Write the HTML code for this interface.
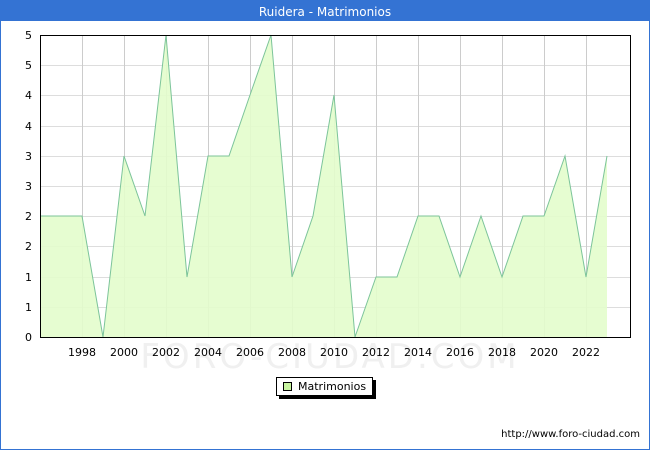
<!DOCTYPE html><html><head><style>body{margin:0;width:650px;height:450px;overflow:hidden;font-family:"DejaVu Sans","Liberation Sans",sans-serif}</style></head><body>
<svg width="650" height="450" xmlns="http://www.w3.org/2000/svg" font-family="DejaVu Sans, Liberation Sans, sans-serif">
<rect x="0" y="0" width="650" height="450" fill="#3473d3"/>
<rect x="1" y="21" width="648" height="428" fill="#fff"/>
<text x="325" y="16" fill="#fff" font-size="12" text-anchor="middle">Ruidera - Matrimonios</text>
<g stroke="#dddddd" stroke-width="1">
<line x1="40" y1="307.5" x2="630" y2="307.5"/><line x1="40" y1="277.5" x2="630" y2="277.5"/><line x1="40" y1="246.5" x2="630" y2="246.5"/><line x1="40" y1="216.5" x2="630" y2="216.5"/><line x1="40" y1="186.5" x2="630" y2="186.5"/><line x1="40" y1="156.5" x2="630" y2="156.5"/><line x1="40" y1="126.5" x2="630" y2="126.5"/><line x1="40" y1="95.5" x2="630" y2="95.5"/><line x1="40" y1="65.5" x2="630" y2="65.5"/>
</g>
<g stroke="#cccccc"><line x1="82.5" y1="35" x2="82.5" y2="337"/><line x1="124.5" y1="35" x2="124.5" y2="337"/><line x1="166.5" y1="35" x2="166.5" y2="337"/><line x1="208.5" y1="35" x2="208.5" y2="337"/><line x1="250.5" y1="35" x2="250.5" y2="337"/><line x1="292.5" y1="35" x2="292.5" y2="337"/><line x1="334.5" y1="35" x2="334.5" y2="337"/><line x1="376.5" y1="35" x2="376.5" y2="337"/><line x1="418.5" y1="35" x2="418.5" y2="337"/><line x1="460.5" y1="35" x2="460.5" y2="337"/><line x1="502.5" y1="35" x2="502.5" y2="337"/><line x1="544.5" y1="35" x2="544.5" y2="337"/><line x1="586.5" y1="35" x2="586.5" y2="337"/></g>
<text x="330" y="368" font-size="34" fill="#f0f0f0" text-anchor="middle" letter-spacing="3">FORO-CIUDAD.COM</text>
<polygon fill="#e3fdcc" fill-opacity="0.9" points="40,337 40,216 61,216 82,216 103,337 124,156 145,216 166,35 187,277 208,156 229,156 250,95 271,35 292,277 313,216 334,95 355,337 376,277 397,277 418,216 439,216 460,277 481,216 502,277 523,216 544,216 565,156 586,277 607,156 607,337"/>
<polyline fill="none" stroke="#7cc49a" stroke-width="1" points="40,216 61,216 82,216 103,337 124,156 145,216 166,35 187,277 208,156 229,156 250,95 271,35 292,277 313,216 334,95 355,337 376,277 397,277 418,216 439,216 460,277 481,216 502,277 523,216 544,216 565,156 586,277 607,156"/>
<rect x="40.5" y="35.5" width="590" height="302" fill="none" stroke="#000"/>
<g font-size="11" fill="#000" text-anchor="end">
<text x="32" y="341">0</text><text x="32" y="311">1</text><text x="32" y="281">1</text><text x="32" y="250">2</text><text x="32" y="220">2</text><text x="32" y="190">3</text><text x="32" y="160">3</text><text x="32" y="130">4</text><text x="32" y="99">4</text><text x="32" y="69">5</text><text x="32" y="39">5</text></g>
<g font-size="11" fill="#000" text-anchor="middle">
<text x="82" y="356">1998</text><text x="124" y="356">2000</text><text x="166" y="356">2002</text><text x="208" y="356">2004</text><text x="250" y="356">2006</text><text x="292" y="356">2008</text><text x="334" y="356">2010</text><text x="376" y="356">2012</text><text x="418" y="356">2014</text><text x="460" y="356">2016</text><text x="502" y="356">2018</text><text x="544" y="356">2020</text><text x="586" y="356">2022</text></g>
<rect x="279" y="380" width="97" height="19" fill="#000"/>
<rect x="276.5" y="377.5" width="96" height="18" fill="#fff" stroke="#000"/>
<rect x="283.5" y="382.5" width="8" height="8" fill="#c8f5a0" stroke="#000"/>
<text x="298" y="390" font-size="11">Matrimonios</text>
<text x="640" y="437" font-size="10" text-anchor="end">http://www.foro-ciudad.com</text>
</svg></body></html>
